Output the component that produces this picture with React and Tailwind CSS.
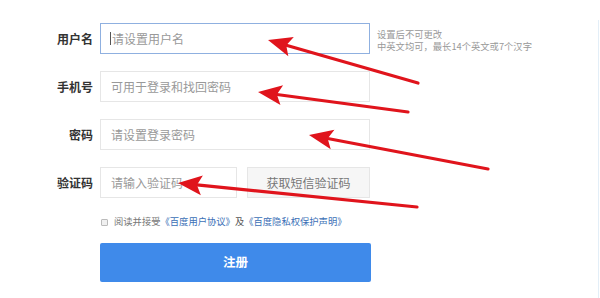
import React from "react";

const font = { fontFamily: '"Noto Sans CJK SC", "Microsoft YaHei", sans-serif' };

function Arrow({ x1, y1, x2, y2 }) {
  const dx = x2 - x1;
  const dy = y2 - y1;
  const len = Math.sqrt(dx * dx + dy * dy);
  const ux = dx / len;
  const uy = dy / len;
  const headLen = 24;
  const headW = 10;
  const bx = x2 - ux * headLen;
  const by = y2 - uy * headLen;
  const px = -uy;
  const py = ux;
  const pts = `${x2},${y2} ${bx + px * headW},${by + py * headW} ${bx + ux * 5},${by + uy * 5} ${bx - px * headW},${by - py * headW}`;
  return (
    <g>
      <line x1={x1} y1={y1} x2={bx + ux * 5} y2={by + uy * 5} stroke="#e0141c" strokeWidth="3.2" strokeLinecap="round" />
      <polygon points={pts} fill="#e0141c" />
    </g>
  );
}

function Row({ label, children, right }) {
  return (
    <div className="flex items-center h-[31px]">
      <div className="w-[93px] text-right text-[12px] font-bold text-[#333] leading-none">{label}</div>
      <div className="ml-[7px] flex items-center">{children}</div>
      {right}
    </div>
  );
}

export default function App() {
  return (
    <div className="relative w-[600px] h-[298px] bg-white overflow-hidden" style={font}>
      <div className="absolute right-[1px] top-[20px] bottom-0 w-[1px] bg-[#e3eef7]" />
      <div className="flex flex-col pt-[23px] gap-[17px]">
        <Row
          label="用户名"
          right={
            <div className="ml-[7px] mt-[2px] flex flex-col gap-[2px] text-[9.3px] text-[#999]">
              <div className="leading-[10px] h-[10px]">设置后不可更改</div>
              <div className="leading-[10px] h-[10px]">中英文均可，最长14个英文或7个汉字</div>
            </div>
          }
        >
          <div className="w-[270px] h-[31px] border border-[#8fb0e0] flex items-center pl-[9px] text-[12px] text-[#999]">
            <span className="inline-block w-[1px] h-[13px] bg-[#555] mr-[1px]" />
            请设置用户名
          </div>
        </Row>
        <Row label="手机号">
          <div className="w-[270px] h-[31px] border border-[#e6e6e6] flex items-center pl-[10px] text-[12px] text-[#999]">
            可用于登录和找回密码
          </div>
        </Row>
        <Row label="密码">
          <div className="w-[270px] h-[31px] border border-[#e6e6e6] flex items-center pl-[10px] text-[12px] text-[#999]">
            请设置登录密码
          </div>
        </Row>
        <Row label="验证码">
          <div className="w-[137px] h-[31px] border border-[#e6e6e6] flex items-center pl-[10px] text-[12px] text-[#999]">
            请输入验证码
          </div>
          <div className="ml-[10px] w-[123px] h-[31px] border border-[#e6e6e6] bg-[#f6f6f6] flex items-center justify-center text-[12px] text-[#777]">
            获取短信验证码
          </div>
        </Row>
      </div>
      <div className="flex items-center ml-[101px] mt-[18px] h-[12px]">
        <div className="w-[7px] h-[7px] border border-[#bbb] bg-[#f0f0f0] rounded-[1px]" />
        <div className="ml-[6px] text-[9.3px] leading-none whitespace-nowrap">
          <span className="text-[#777]">阅读并接受</span>
          <span className="text-[#3b6fb6]">《百度用户协议》</span>
          <span className="text-[#555]">及</span>
          <span className="text-[#3b6fb6]">《百度隐私权保护声明》</span>
        </div>
      </div>
      <div className="ml-[100px] mt-[15px] w-[271px] h-[39px] rounded-[2px] bg-[#3f8aea] flex items-center justify-center text-white text-[12.5px] font-bold">
        注册
      </div>
      <svg className="absolute inset-0 pointer-events-none" width="600" height="298">
        <Arrow x1={418} y1={83} x2={268} y2={40} />
        <Arrow x1={408} y1={112} x2={258} y2={92} />
        <Arrow x1={488} y1={169} x2={309} y2={135} />
        <Arrow x1={417} y1={207} x2={178} y2={183} />
      </svg>
    </div>
  );
}
